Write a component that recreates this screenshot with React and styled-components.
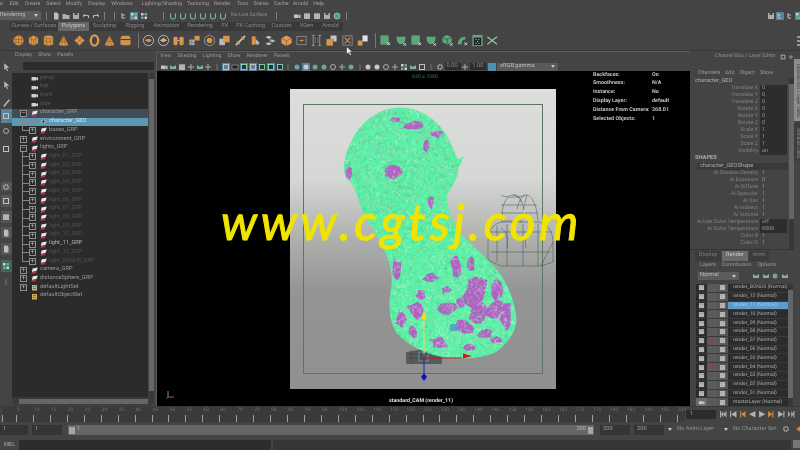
import React, { useMemo } from 'react'
import styled, { createGlobalStyle } from 'styled-components'

const GlobalStyle = createGlobalStyle`
  html, body { margin: 0; padding: 0; background: #444; }
  body { width: 800px; height: 450px; overflow: hidden; }
  * { box-sizing: border-box; }
`

const Screen = styled.div`
  position: relative;
  width: 800px;
  height: 450px;
  overflow: hidden;
  background: #444;
  color: #a4a4a4;
  font: 5.7px/1 Roboto, "Liberation Sans", sans-serif;
  text-rendering: geometricPrecision;
  white-space: nowrap;
  display: grid;
  grid-template-rows: 9px 13px 9px 20px 355px 18px 13px 13px;
  filter: blur(0.35px);
`

const MenuBar = styled.div`
  display: flex;
  align-items: center;
  font-size: 5.3px;
  background: linear-gradient(#4a4340, #444 25%);
`
const MenuItem = styled.span`
  position: relative;
  margin-left: ${p => p.$gap}px;
  color: #a0a0a0;
`

const StatusRow = styled.div`
  display: flex;
  align-items: center;
`
const ModeSelect = styled.div`
  width: 41px;
  height: 9px;
  background: #5c5c5c;
  color: #b8b8b8;
  display: flex;
  align-items: center;
  justify-content: space-between;
  padding: 0 3px 0 0;
  border-radius: 0 1px 1px 0;
`
const Caret = styled.i`
  width: 0;
  height: 0;
  border: 2px solid transparent;
  border-top: 3px solid #c8c8c8;
  border-bottom: 0;
  display: inline-block;
`
const Divider = styled.i`
  width: 1px;
  height: 8px;
  background: #7c7c7c;
  margin-left: ${p => p.$gap}px;
  flex: none;
`
const IconGroup = styled.div`
  display: flex;
  align-items: center;
  flex: none;
  margin-left: ${p => p.$gap || 0}px;
  gap: ${p => p.$space || 2}px;
`
const Glyph = styled.svg`
  width: ${p => p.$size || 8}px;
  height: ${p => p.$size || 8}px;
  flex: none;
  display: block;
  background: ${p => (p.$on ? '#56829a' : 'transparent')};
`
const RightGroup = styled(IconGroup)`
  margin-left: auto;
`
const LiveLabel = styled.span`
  margin-left: 4px;
  width: 45px;
  font-size: 5.2px;
  color: #8e8e8e;
`

const TabRow = styled.div`
  display: flex;
  align-items: stretch;
  padding-left: 10px;
`
const TabStrip = styled.div`
  display: flex;
  width: 333px;
  background: #393939;
`
const ShelfTab = styled.span`
  display: flex;
  align-items: center;
  justify-content: center;
  width: ${p => p.$w}px;
  background: ${p => (p.$on ? '#686868' : 'transparent')};
  color: ${p => (p.$on ? '#c8c8c8' : '#858585')};
`

const Shelf = styled.div`
  display: flex;
  align-items: center;
  padding-left: 11.5px;
  border-bottom: 1px solid #383838;
`
const ShelfSep = styled.i`
  width: 1px;
  height: 15px;
  background: #777;
  margin: 0 3px 0 4px;
  flex: none;
`
const ShelfIcon = styled.svg`
  width: 13px;
  height: 13px;
  flex: none;
  margin-right: 2.3px;
`
const Scroller = styled.div`
  margin-left: auto;
  width: 4px;
  margin-right: 3px;
  display: flex;
  flex-direction: column;
  gap: 2px;
  align-items: center;
`
const Nub = styled.i`
  width: 3px;
  height: 2px;
  background: #999;
`

const Main = styled.div`
  display: grid;
  grid-template-columns: 12px 143px 535px 110px;
  min-height: 0;
`

const Toolbox = styled.div`
  display: flex;
  flex-direction: column;
  align-items: center;
`
const ToolSlot = styled.div`
  width: 11px;
  height: ${p => p.$h || 10}px;
  margin-top: ${p => p.$mt || 0}px;
  flex: none;
  background: ${p => p.$bg || 'transparent'};
  display: flex;
  align-items: center;
  justify-content: center;
`

const Outliner = styled.div`
  display: flex;
  flex-direction: column;
  min-height: 0;
`
const PanelMenu = styled.div`
  height: 10px;
  flex: none;
  display: flex;
  align-items: center;
  padding-left: 3px;
  gap: 6px;
  font-size: 5.3px;
  color: #989898;
`
const FilterRow = styled.div`
  height: 12px;
  flex: none;
  display: flex;
  padding: 1px 1px 3px 11px;
`
const FilterInput = styled.div`
  flex: 1;
  background: #2c2c2c;
`
const OutlinerBody = styled.div`
  flex: 1;
  display: flex;
  min-height: 0;
`
const TreeList = styled.div`
  width: 136px;
  height: 325px;
  background: #2b2b2b;
  padding-top: 1px;
  overflow: hidden;
`
const ScrollTrack = styled.div`
  width: ${p => p.$w || 5}px;
  margin-left: ${p => p.$ml ?? 1}px;
  background: #383838;
  display: flex;
  flex-direction: column;
  align-items: center;
`
const ScrollThumb = styled.div`
  width: 100%;
  flex: 1;
  margin: ${p => p.$m || '6px 0'};
  background: #666;
`
const HScroll = styled.div`
  height: 8px;
  flex: none;
  margin: 0 1px 1px 1px;
  background: #3a3a3a;
  display: flex;
  align-items: center;
  padding: 0 6px;
`
const HThumb = styled.div`
  flex: 1;
  height: 5px;
  background: #666;
`

const TreeRow = styled.div`
  position: relative;
  height: 8.72px;
  display: flex;
  align-items: center;
  padding-left: ${p => p.$indent}px;
  background: ${p => (p.$sel === 'main' ? '#5b98b6' : p.$sel === 'parent' ? '#414d58' : 'transparent')};
  color: ${p => p.$color};
  &::before {
    content: '';
    display: ${p => (p.$branch ? 'block' : 'none')};
    position: absolute;
    left: 10px;
    top: -1px;
    bottom: ${p => (p.$last ? '4px' : '-1px')};
    width: 1px;
    background: #858585;
  }
  &::after {
    content: '';
    display: ${p => (p.$branch ? 'block' : 'none')};
    position: absolute;
    left: 10px;
    top: 4px;
    width: ${p => (p.$plain ? 16 : 7)}px;
    height: 1px;
    background: #858585;
  }
`
const Expander = styled.span`
  position: relative;
  z-index: 1;
  width: 7px;
  height: 7px;
  flex: none;
  margin-right: 4px;
  border: 1px solid #8e8e8e;
  background: #2b2b2b;
  color: #c0c0c0;
  font: 7px/5px "Liberation Sans", sans-serif;
  text-align: center;
  visibility: ${p => (p.$hide ? 'hidden' : 'visible')};
`
const NodeIcon = styled.svg`
  width: 7px;
  height: 7px;
  flex: none;
  margin-right: 2px;
`

const Viewport = styled.div`
  position: relative;
  display: flex;
  flex-direction: column;
  margin-left: 1px;
  border-top: 1px solid #5a5a5a;
  border-left: 1px solid #5a5a5a;
  min-height: 0;
`
const ViewIcons = styled.div`
  height: 9px;
  flex: none;
  display: flex;
  align-items: center;
  padding-left: 3px;
  gap: 0.9px;
`
const NumField = styled.span`
  width: 16px;
  height: 7px;
  flex: none;
  background: #2c2c2c;
  color: #8e8e8e;
  padding: 0.5px 0 0 2px;
`
const GammaBlue = styled.i`
  width: 8px;
  height: 8px;
  flex: none;
  margin-left: 1px;
  background: #4d93ad;
`
const GammaSelect = styled.div`
  width: 61px;
  height: 8px;
  flex: none;
  background: #5a5a5a;
  color: #bcbcbc;
  display: flex;
  align-items: center;
  justify-content: space-between;
  padding: 0 3px 0 3px;
`
const Canvas = styled.div`
  position: relative;
  flex: 1;
  background: #000;
  display: flex;
  padding: 18px 134px 17px 133px;
  min-height: 0;
`
const Plate = styled.div`
  flex: 1;
  padding: 15px 13px;
  display: flex;
  background: linear-gradient(#dcdedb 0%, #d5d7d5 30%, #abadab 52%, #939493 68%, #8f908f 100%);
`
const SafeGate = styled.div`
  flex: 1;
  border: 1px solid #5d7564;
`
const MeshLayer = styled.svg`
  position: absolute;
  left: 0;
  top: 0;
  width: 534px;
  height: 337px;
`
const ResLabel = styled.span`
  position: absolute;
  left: 255px;
  top: 4px;
  color: #1f5a35;
  font-size: 5.2px;
  font-weight: 700;
`
const CamLabel = styled.span`
  position: absolute;
  left: 232px;
  bottom: 2px;
  color: #e0e0e0;
  font-size: 5.3px;
  font-weight: 700;
`
const Hud = styled.div`
  position: absolute;
  left: 436px;
  top: 0;
  display: grid;
  grid-template-columns: 59px auto;
  grid-auto-rows: 8.8px;
  align-items: center;
  color: #c4c4c4;
  font-size: 5.4px;
  font-weight: 700;
`
const AxisMark = styled.svg`
  position: absolute;
  left: 8px;
  bottom: 6px;
  width: 12px;
  height: 12px;
`

const Side = styled.div`
  display: grid;
  grid-template-columns: 104px 6px;
  min-height: 0;
`
const SideMain = styled.div`
  display: flex;
  flex-direction: column;
  min-height: 0;
`
const SideHeader = styled.div`
  height: 18px;
  flex: none;
  display: flex;
  align-items: flex-start;
  padding: 3px 0 0 25px;
  color: #8e8e8e;
  font-size: 5.2px;
`
const HeaderTools = styled.div`
  margin-left: auto;
  display: flex;
  gap: 2px;
`
const ChannelMenu = styled.div`
  height: 9px;
  flex: none;
  display: flex;
  align-items: center;
  padding-left: 8px;
  gap: 5px;
  font-size: 5.4px;
  color: #9c9c9c;
`
const ChannelBody = styled.div`
  height: 172px;
  flex: none;
  display: flex;
  overflow: hidden;
  border-bottom: 1px solid #353535;
`
const ChannelRows = styled.div`
  width: 98px;
  flex: none;
`
const NodeTitle = styled.div`
  padding-left: 5px;
  color: #adadad;
  display: flex;
  align-items: center;
  font-weight: ${p => (p.$bold ? 700 : 400)};
  height: ${p => p.$h || 7}px;
`
const ShapeName = styled.div`
  height: 7px;
  margin-left: 7px;
  padding-left: 3px;
  background: #393939;
  color: #adadad;
  display: flex;
  align-items: center;
`
const AttrRow = styled.div`
  display: grid;
  grid-template-columns: 68px 27px;
  column-gap: 2px;
  height: 7px;
  align-items: center;
  color: #828282;
  font-size: 5.4px;
`
const AttrName = styled.span`
  text-align: right;
`
const AttrValue = styled.span`
  height: 7px;
  padding-left: 2px;
  line-height: 7px;
  color: #999;
  background: ${p => (p.$dark ? '#2d2d2d' : 'transparent')};
`

const LayerTabs = styled.div`
  height: 10px;
  margin-top: 1px;
  flex: none;
  display: flex;
  align-items: stretch;
  padding-left: 5px;
`
const LayerTab = styled.span`
  width: ${p => p.$w}px;
  display: flex;
  align-items: center;
  justify-content: center;
  background: ${p => (p.$on ? '#6a6a6a' : '#3b3b3b')};
  color: ${p => (p.$on ? '#c8c8c8' : '#7c7c7c')};
  margin-right: 1px;
`
const LayerMenu = styled(ChannelMenu)`
  height: 10px;
  padding-left: 10px;
  gap: 6px;
`
const LayerTools = styled.div`
  height: 10px;
  flex: none;
  display: flex;
  align-items: center;
  padding-left: 8px;
`
const BlendSelect = styled.div`
  width: 41px;
  height: 8px;
  background: #5c5c5c;
  color: #bcbcbc;
  display: flex;
  align-items: center;
  justify-content: space-between;
  padding: 0 3px 0 2px;
  margin-right: 11px;
`
const LayerBody = styled.div`
  display: flex;
  margin-top: 3px;
  padding-left: 6px;
  flex: 1;
  min-height: 0;
`
const LayerList = styled.div`
  width: 92px;
  flex: none;
`
const LayerRow = styled.div`
  display: grid;
  grid-template-columns: 11px 10px 11px 60px;
  height: 8.8px;
  align-items: stretch;
  border-bottom: 1px solid #3a3a3a;
`
const LayerCell = styled.span`
  display: flex;
  align-items: center;
  justify-content: center;
  background: ${p => p.$bg};
`
const RedDot = styled.i`
  width: 4px;
  height: 4px;
  border-radius: 50%;
  background: #9c3a42;
`
const LayerName = styled.span`
  display: flex;
  align-items: center;
  padding-left: 5px;
  overflow: hidden;
  background: ${p => (p.$on ? '#5b9ccb' : '#2c2c2c')};
  color: ${p => (p.$on ? '#a8cbe2' : '#adadad')};
  font-size: 5.05px;
`
const SideTabs = styled.div`
  display: flex;
  flex-direction: column;
  padding-top: 8px;
  gap: 2px;
`
const SideTab = styled.span`
  height: ${p => p.$h}px;
  writing-mode: vertical-rl;
  font-size: 4.6px;
  padding-top: 2px;
  overflow: hidden;
  text-align: center;
  line-height: 6px;
  background: ${p => (p.$on ? '#8d8d8d' : '#3d3d3d')};
  color: ${p => (p.$on ? '#444' : '#8d8d8d')};
`

const TimeRow = styled.div`
  display: flex;
  align-items: flex-start;
  border-top: 1px solid #383838;
`
const Ruler = styled.div`
  margin-left: 2px;
  width: 683px;
  height: 15px;
  flex: none;
  background: #3a3a3a;
  display: flex;
`
const RulerCell = styled.span`
  width: ${p => p.$w || 16.95}px;
  flex: none;
  display: block;
  color: #6e6e6e;
  font-size: 5px;
  padding: 1px 0 0 1px;
  background: linear-gradient(#a0a0a0, #a0a0a0) 0 100% / 1px 7px no-repeat;
`
const CurrentFrame = styled.span`
  width: 30px;
  height: 9px;
  flex: none;
  margin: 3px 0 0 1px;
  background: #2c2c2c;
  color: #a0a0a0;
  padding: 1.5px 0 0 4px;
`
const Transport = styled.div`
  display: flex;
  align-items: center;
  margin: 3px 0 0 3px;
  gap: 1.2px;
`

const RangeRow = styled.div`
  display: flex;
  align-items: flex-start;
  padding-top: 1px;
`
const RangeField = styled.span`
  width: ${p => p.$w}px;
  height: 10px;
  flex: none;
  margin-left: ${p => p.$gap || 0}px;
  background: #343434;
  color: #a0a0a0;
  padding: 2px 0 0 3px;
`
const RangeSlider = styled.div`
  width: 526px;
  height: 10px;
  flex: none;
  margin-left: 6px;
  background: #666;
  display: flex;
  align-items: center;
  padding: 0 1px;
  color: #b4b4b4;
`
const RangeHandle = styled.i`
  width: ${p => p.$w}px;
  height: 7px;
  flex: none;
  background: #a6a6a6;
`
const RangeStart = styled.span`
  margin-left: 2px;
`
const RangeEnd = styled.span`
  margin: 0 2px 0 auto;
`
const SetLabel = styled.span`
  display: flex;
  align-items: center;
  gap: 5px;
  margin-left: ${p => p.$gap}px;
  padding-top: 2px;
  width: ${p => p.$w}px;
  flex: none;
  color: #909090;
`

const CommandRow = styled.div`
  display: flex;
  align-items: stretch;
  padding-top: 3px;
`
const MelLabel = styled.span`
  width: 19px;
  padding: 3px 0 0 4px;
  color: #a8a8a8;
`
const MelInput = styled.div`
  width: 252px;
  background: #2d2d2d;
  flex: none;
`
const MelOutput = styled.div`
  flex: 1;
  margin: 0 2px;
  background: #363636;
`
const MelButton = styled.div`
  width: 8px;
  height: 8px;
  background: #777;
  margin-right: 2px;
`

const Watermark = styled.div`
  position: absolute;
  left: 221px;
  top: 196px;
  color: #f0e400;
  font: italic 400 50px/1 Lato, "Liberation Sans", sans-serif;
  letter-spacing: 3.6px;
  -webkit-text-stroke: 1px #f0e400;
  pointer-events: none;
`
const Pointer = styled.svg`
  position: absolute;
  left: 346px;
  top: 46px;
  width: 7px;
  height: 10px;
`

const menu = [
  ['e', 0], ['Edit', 7], ['Create', 6], ['Select', 6], ['Modify', 5], ['Display', 6], ['Windows', 6],
  ['Lighting/Shading', 9], ['Texturing', 5], ['Render', 5], ['Toon', 6], ['Stereo', 5], ['Cache', 5], ['Arnold', 4], ['Help', 5],
]
const tabs = [
  ['Curves / Surfaces', 48], ['Polygons', 31, true], ['Sculpting', 31], ['Rigging', 30], ['Animation', 33], ['Rendering', 34],
  ['FX', 16], ['FX Caching', 35], ['Custom', 27], ['XGen', 23], ['Arnold', 25],
]

const shapes = {
  sphere: <><circle cx="7" cy="7" r="5.5" fill="#d8954c" /><path d="M2 6h10M2 9h10M7 1.5v11M4 2.5v9M10 2.5v9" stroke="#8a5a2a" strokeWidth=".6" fill="none" /></>,
  cube: <><path d="M7 1.5l5 2.500v6l-5 2.500-5-2.500V4z" fill="#d8954c" /><path d="M2 4l5 2.500L12 4M7 6.500v6M4.500 2.800v8.500M9.500 2.800v8.500" stroke="#8a5a2a" strokeWidth=".6" fill="none" /></>,
  cyl: <><path d="M2 3.500c0-2.500 10-2.500 10 0v7c0 2.500-10 2.500-10 0z" fill="#d8954c" /><path d="M2 3.500c0 2 10 2 10 0M2 7c0 2 10 2 10 0M5 4.500v8M9 4.500v8" stroke="#8a5a2a" strokeWidth=".6" fill="none" /></>,
  cone: <><path d="M7 1.500l5 10c-2 1.500-8 1.500-10 0z" fill="#d8954c" /><path d="M7 1.500L5 12.500M7 1.500l2 11M4 8h6" stroke="#8a5a2a" strokeWidth=".6" fill="none" /></>,
  plane: <><path d="M7 1.500L12.500 7 7 12.500 1.500 7z" fill="#d8954c" /><path d="M4.200 4.200L9.800 9.800M9.800 4.200L4.200 9.800" stroke="#8a5a2a" strokeWidth=".6" fill="none" /></>,
  torus: <ellipse cx="7" cy="7" rx="4" ry="5.500" fill="none" stroke="#d8954c" strokeWidth="2.600" />,
  bucket: <><path d="M3 2h8l1.500 3v6c0 1.500-11 1.500-11 0V5z" fill="#d0954f" /><path d="M1.500 6h11" stroke="#333" strokeWidth="1" /></>,
  ringA: <><circle cx="7" cy="7" r="5.500" fill="none" stroke="#bcbcbc" strokeWidth="1" /><path d="M3.500 7c1-2 6-2 7 0-1 2-6 2-7 0z" fill="#d8954c" /></>,
  ringB: <><circle cx="7" cy="7" r="5.500" fill="none" stroke="#bcbcbc" strokeWidth="1" /><path d="M3 7l4-3 4 3-4 2z" fill="#d8ac80" /></>,
  pair: <><rect x="1.500" y="3" width="4.500" height="9" rx="1.500" fill="#d8954c" /><rect x="8" y="3" width="4.500" height="9" rx="1.500" fill="#d8954c" /><path d="M6 7h2" stroke="#ccc" /></>,
  grid: <><rect x="1.500" y="6" width="5.500" height="6" fill="#b0b0b0" /><rect x="7" y="2" width="5.500" height="5" fill="#d8954c" /><path d="M1.500 9h5.500M4 6v6" stroke="#555" strokeWidth=".5" /></>,
  hex: <><path d="M7 1l5.200 3v6L7 13l-5.200-3V4z" fill="none" stroke="#aaa" strokeWidth=".8" /><circle cx="7" cy="7" r="3" fill="#d8954c" /></>,
  stack: <><rect x="1.500" y="5" width="6" height="7" fill="#bcbcbc" /><rect x="5.500" y="2" width="7" height="7" fill="#d8954c" /></>,
  slash: <><path d="M2 12L12 2" stroke="#ccc" strokeWidth="1.600" /><path d="M3 8l3 3M8 3l3 3" stroke="#d8954c" strokeWidth="1.400" /></>,
  bevel: <><path d="M3 2.500h4v9H3z" fill="#d8954c" /><path d="M7 5l4.500 4.500L9 12 7 10z" fill="#b8b8b8" /></>,
  nodes: <><path d="M1.500 3.500L5 2l3.500 1.500L5 5zM5.500 7.500L9 6l3.500 1.500L9 9zM1.500 10.500L5 9l3.500 1.500L5 12z" fill="#c4c4c4" /><path d="M5 5l4 2" stroke="#d8954c" /></>,
  box: <><path d="M7 1.500l5.500 3v5.500L7 13l-5.500-3V4.500z" fill="#dd9c4e" /><path d="M1.500 4.500L7 7.500l5.500-3M7 7.500V13" stroke="#7c5228" strokeWidth=".7" fill="none" /></>,
  frame: <><rect x="2" y="2.500" width="10" height="9" fill="none" stroke="#999" strokeWidth=".8" /><path d="M5 7h4" stroke="#d8954c" strokeWidth="1.400" /></>,
  bars: <><path d="M3.500 1.500v11M10.500 1.500v11M2 1.500h3M2 12.500h3M9 1.500h3M9 12.500h3" stroke="#aaa" strokeWidth=".8" /><path d="M5.500 4v6M8.500 4v6" stroke="#d8954c" strokeDasharray="1 1" /></>,
  quad: <><rect x="1.500" y="5.500" width="7" height="7" fill="#d8954c" /><path d="M6 1.500h6.500V8H9V5.500H6z" fill="#c4c4c4" /></>,
  xbox: <><rect x="2" y="2" width="10" height="10" fill="#444" stroke="#999" strokeWidth=".8" /><path d="M4 4l6 6M10 4l-6 6" stroke="#d8954c" strokeWidth="1.200" /></>,
  step: <><rect x="2" y="7" width="5" height="5.500" fill="#d8954c" /><path d="M7 1.500h5.500V8H7z" fill="#e4e4e4" /></>,
  greenBox: <><rect x="1.500" y="1.500" width="9" height="10" fill="#5aa87c" /><path d="M9 9l3 3M12 9l-3 3" stroke="#ddd" /></>,
  greenCup: <><path d="M1.500 3h10c0 5-2 8-5 8s-5-3-5-8z" fill="#5aa87c" /><path d="M9 10l3 2.500M12 10l-3 2.500" stroke="#ddd" /></>,
  greenCube: <><path d="M6.500 1l5 2.500v5l-5 3-5-3v-5z" fill="#5aa87c" /><path d="M1.500 3.500l5 2.500 5-2.500M6.500 6v5.500" stroke="#333" strokeWidth=".6" fill="none" /><path d="M9.500 10l3 2.500M12.500 10l-3 2.500" stroke="#ddd" /></>,
  greenLeg: <><path d="M2 11c0-5 3-8 8-8v3c-3 0-4 2-4 5z" fill="#5aa87c" /><path d="M9 9l3 3M12 9l-3 3" stroke="#ddd" /></>,
  greenDice: <><rect x="1.500" y="1" width="11" height="12" fill="#5aa87c" /><rect x="3" y="4" width="8" height="8" fill="#222" /><path d="M5 6h1M8 6h1M6.500 8h1M5 10h1M8 10h1" stroke="#eee" /></>,
  greenX: <path d="M1.500 3l5 4 5.500-4M1.500 11l5-4 5.500 4" stroke="#8fd0a8" strokeWidth="1.200" fill="none" />,
}
const shelfA = ['sphere', 'cube', 'cyl', 'cone', 'plane', 'torus', 'cone', 'bucket']
const shelfB = ['ringA', 'ringB', 'pair', 'grid', 'hex', 'stack', 'slash', 'bevel', 'nodes', 'box', 'frame', 'bars', 'quad', 'xbox', 'step']
const shelfC = ['greenBox', 'greenCup', 'greenBox', 'greenCup', 'greenCube', 'greenLeg', 'greenDice', 'greenX']

const mini = {
  page: <path d="M2 .5h3l1.500 1.500v5.500H2z" fill="#bdbdbd" />,
  folder: <path d="M.5 2h3l1 1h3v4h-7z" fill="#aeaeae" />,
  disk: <><rect x="1" y="1" width="6" height="6" fill="#aeaeae" /><rect x="2.500" y="1" width="3" height="2" fill="#444" /></>,
  undo: <path d="M1.500 5V3.500h5V6M1.500 3.500l1.500-1.500" stroke="#b8b8b8" fill="none" />,
  redo: <path d="M6.500 5V3.500h-5V6M6.500 3.500L5 2" stroke="#b8b8b8" fill="none" />,
  tree: <path d="M2 1v2h3M2 3v3h3" stroke="#c0c0c0" fill="none" />,
  dots: <><rect x="1" y="1" width="2.500" height="2.500" fill="#d0d0d0" /><rect x="4.500" y="1" width="2.500" height="2.500" fill="#6a9" /><rect x="1" y="4.500" width="2.500" height="2.500" fill="#6a9" /><rect x="4.500" y="4.500" width="2.500" height="2.500" fill="#d0d0d0" /></>,
  magnet: <path d="M1.500 1.500v3a2.500 2.500 0 0 0 5 0v-3" stroke="#7fb0a8" strokeWidth="1.100" fill="none" />,
  cam: <><rect x="1" y="2.500" width="4.500" height="3.500" fill="#c4c4c4" /><path d="M5.500 3.500l2-1v4l-2-1z" fill="#c4c4c4" /></>,
  clap: <><rect x="1" y="2.500" width="6" height="4.500" fill="#b4b4b4" /><path d="M1 1.500h6v1H1z" fill="#e4e4e4" /></>,
  teal: <circle cx="4" cy="4" r="3" fill="#3aa3a0" stroke="#ddd" strokeWidth=".6" />,
  frame: <rect x="1.500" y="1.500" width="5" height="5" fill="none" stroke="#c0c0c0" />,
  film: <rect x="1" y="2" width="6" height="4" fill="#222" stroke="#999" strokeWidth=".7" />,
  blue: <rect x="1.500" y="1.500" width="5" height="5" fill="#26333a" stroke="#9fc" strokeWidth=".7" />,
  ball: <circle cx="4" cy="4" r="2.500" fill="#6fa39b" />,
  ballW: <circle cx="4" cy="4" r="2.500" fill="#c8c8c8" />,
  ring: <circle cx="4" cy="4" r="2.500" fill="none" stroke="#aaa" />,
  cross: <path d="M4 1v6M1 4h6" stroke="#aaa" />,
  gear: <circle cx="4" cy="4" r="2.200" fill="none" stroke="#bbb" strokeWidth="1.300" strokeDasharray="1.500 .5" />,
  shot: <path d="M1 6V2l3 2 3-2v4z" fill="#7fb0a0" />,
  bar: <path d="M4 1v6" stroke="#808080" strokeWidth=".8" />,
}
const Mini = ({ k, on, size }) => (
  <Glyph viewBox="0 0 8 8" $on={on} $size={size}>{mini[k]}</Glyph>
)

const viewIcons = [
  ['cam'], ['shot'], ['clap'], ['cross'], ['shot'], ['cross'], ['bar'],
  ['frame', 1], ['film'], ['blue', 1], ['frame', 1], ['blue'], ['blue', 1], ['blue'], ['bar'],
  ['ball'], ['ballW', 1], ['ball'], ['ball'], ['ring'], ['cross'], ['ball'], ['bar'],
  ['ballW'], ['ballW'], ['ring'], ['cross'], ['dots'], ['shot'], ['frame'], ['bar'], ['gear'],
]

const camIcon = <><rect x=".5" y="2" width="4.500" height="3.500" fill="#d0d0d0" /><path d="M5 3l2-1v3.500L5 4.500z" fill="#d0d0d0" /></>
const grpIcon = <><path d="M1.500 1.500L6.800.5 5.500 4 1 5z" fill="#e8e8e8" /><path d="M1 5l4.500-1-.8 2.500L.5 6.800z" fill="#b8304a" /></>
const geoIcon = <><path d="M.5 3.500L3.500 1l3 2.500-3 2.500z" fill="#999" stroke="#ddd" strokeWidth=".5" /><path d="M1.500 3.500h4M3.500 1v5" stroke="#222" strokeWidth=".5" /></>
const setIcon = <><rect x="1" y="1" width="5" height="5.500" fill="#c8b060" /><path d="M2 2.500h3M2 4.500h3" stroke="#4a7fae" /></>

const lightNames = ['01', '02', '03', '04', '05', '06', '07', '08', '09', '10', '11', '12', 'BONUS']
const tree = [
  { t: 'persp', icon: camIcon, indent: 8, hide: true, c: '#5a5a5a' },
  { t: 'top', icon: camIcon, indent: 8, hide: true, c: '#5a5a5a' },
  { t: 'front', icon: camIcon, indent: 8, hide: true, c: '#5a5a5a' },
  { t: 'side', icon: camIcon, indent: 8, hide: true, c: '#5a5a5a' },
  { t: 'character_GRP', icon: grpIcon, indent: 8, sym: '−', c: '#989898', sel: 'parent' },
  { t: 'character_GEO', icon: geoIcon, indent: 17, hide: true, c: '#dce4ea', sel: 'main', branch: true, plain: true },
  { t: 'bases_GRP', icon: grpIcon, indent: 17, sym: '+', c: '#989898', branch: true, last: true },
  { t: 'environment_GRP', icon: grpIcon, indent: 8, sym: '+', c: '#989898' },
  { t: 'lights_GRP', icon: grpIcon, indent: 8, sym: '−', c: '#989898' },
  ...lightNames.map((n, i) => ({
    t: `light_${n}_GRP`, icon: grpIcon, indent: 17, sym: '+', branch: true,
    last: i === lightNames.length - 1, c: n === '11' ? '#b4b4b4' : '#505050',
  })),
  { t: 'camera_GRP', icon: grpIcon, indent: 8, sym: '+', c: '#989898' },
  { t: 'distanceSphere_GRP', icon: grpIcon, indent: 8, sym: '+', c: '#989898' },
  { t: 'defaultLightSet', icon: setIcon, indent: 8, sym: '+', c: '#989898' },
  { t: 'defaultObjectSet', icon: setIcon, indent: 8, hide: true, c: '#989898' },
]

const hud = [
  ['Backfaces:', 'On'], ['Smoothness:', 'N/A'], ['Instance:', 'No'], ['Display Layer:', 'default'],
  ['Distance From Camera:', '268.01'], ['Selected Objects:', '1'],
]
const attrs = [
  ['Translate X', '0'], ['Translate Y', '0'], ['Translate Z', '0'], ['Rotate X', '0'], ['Rotate Y', '0'], ['Rotate Z', '0'],
  ['Scale X', '1'], ['Scale Y', '1'], ['Scale Z', '1'], ['Visibility', 'on'],
]
const shapeAttrs = [
  ['Ai Shadow Density', '1'], ['Ai Exposure', '0'], ['Ai Diffuse', '1'], ['Ai Specular', '1'], ['Ai Sss', '1'],
  ['Ai Indirect', '1'], ['Ai Volume', '1'], ['Ai Use Color Temperature', 'off', true], ['Ai Color Temperature', '6500', true],
  ['Color R', '1'], ['Color G', '1'],
]
const layers = ['BONUS', '12', '11', '10', '09', '08', '07', '06', '05', '04', '03', '02', '01']

const headBody = 'M397 106C415 105 436 116 446 135C452 146 455 156 457 158L462 155L460 160L457 166C457 176 450 186 445 193C446 206 449 216 454 226C464 238 482 252 494 266C506 280 513 298 515 316C515 330 507 340 496 349C480 357 460 357 444 355C426 352 408 344 396 331C388 318 388 302 390 290C393 274 390 262 383 246C378 232 368 222 362 210C358 198 354 184 350 180C344 176 342 168 344 160C345 152 347 146 350 142C355 128 370 108 397 106Z'

const patches = [
  [392, 170, 10, 11], [348, 172, 3, 8], [412, 124, 10, 5], [436, 132, 6, 4], [430, 200, 4, 9], [394, 118, 6, 3], [425, 145, 3, 8],
  [396, 268, 5, 12], [474, 291, 14, 17], [494, 308, 11, 10], [478, 312, 9, 12], [505, 312, 6, 17], [415, 308, 9, 10],
  [445, 306, 11, 6], [462, 325, 11, 8], [438, 340, 10, 6], [400, 318, 6, 8], [484, 332, 8, 5], [430, 276, 9, 5], [455, 264, 6, 11],
  [412, 330, 5, 6], [497, 288, 6, 12], [468, 345, 6, 4], [495, 338, 6, 4], [445, 288, 6, 4], [470, 262, 4, 9], [420, 292, 5, 5], [460, 300, 5, 6],
]

const Mesh = () => {
  const { wire, blobs } = useMemo(() => {
    let seed = 7331
    const rnd = () => {
      seed = (seed * 16807) % 2147483647
      return seed / 2147483647
    }
    // wire strokes are batched per colour, one path each
    const palette = ['#a8c6b4', '#a88fc0', '#b8fbd4', '#3cc888', '#7f9a90']
    const strokes = palette.map(() => '')
    for (let i = 0; i < 6500; i++) {
      const x = 342 + rnd() * 176
      const y = 104 + rnd() * 256
      const a = rnd() * Math.PI * 2
      const len = 1.5 + rnd() * 4
      const r = rnd()
      let c
      if (y < 235) c = r < 0.3 ? 0 : r < 0.42 ? 1 : r < 0.72 ? 2 : r < 0.9 ? 3 : 4
      else c = r < 0.52 ? 2 : r < 0.78 ? 3 : 0
      strokes[c] += `M${x.toFixed(1)} ${y.toFixed(1)}l${(Math.cos(a) * len).toFixed(1)} ${(Math.sin(a) * len).toFixed(1)}`
    }
    const polys = patches.map(([x, y, rx, ry]) => {
      const pts = []
      for (let k = 0; k < 9; k++) {
        const t = (k / 9) * Math.PI * 2
        const s = 0.6 + rnd() * 0.6
        pts.push(`${(x + Math.cos(t) * rx * s).toFixed(1)},${(y + Math.sin(t) * ry * s).toFixed(1)}`)
      }
      return pts.join(' ')
    })
    return {
      wire: strokes.map((d, i) => <path key={i} d={d} stroke={palette[i]} strokeWidth=".4" fill="none" />),
      blobs: polys,
    }
  }, [])
  return (
    <MeshLayer viewBox="156 69 534 337">
      <defs>
        <clipPath id="blob"><path d={headBody} /></clipPath>
      </defs>
      <g fill="none" stroke="#3f5348" strokeWidth=".5">
        <path d="M501 220c-1-18 5-27 11-27s10 8 11 14M512 193c5 0 8 3 8 7M516 207c2-10 6-14 10-14s10 9 11 27" />
        <path d="M500 203h22M500 211h23M501 219h21M524 203h12M524 211h13M500 193c4 3 20 3 24 0M522 208l4-15" />
        <path d="M487 240c0-14 8-20 16-20h32c10 0 17 8 17 20v20l-12 4h-40l-13-6z" />
        <path d="M496 224v36M506 222v42M522 222v42M537 222v42M490 250h60M487 230h64M540 264l12-24M500 226c6 4 8 10 6 20M530 226c-5 4-7 10-5 20" />
      </g>
      <path d="M405 350l24-4 12 4v12h-36z" fill="#5a5a5a" />
      <path d="M408 352h30M407 356h32M410 349v12M420 347v14" stroke="#3f3f3f" strokeWidth=".6" />
      <path d={headBody} fill="#5bf0a6" stroke="#5bf0a6" strokeWidth="1" />
      <g clipPath="url(#blob)">
        {blobs.map((pts, i) => <polygon key={i} points={pts} fill="#b45fc4" />)}
        <circle cx="394" cy="170" r="11" fill="none" stroke="#54e09c" strokeWidth="1.500" />
        {wire}
      </g>
      <rect x="449" y="322" width="7" height="7" fill="#4f9fc0" opacity=".85" />
      <rect x="418" y="350" width="9" height="9" fill="none" stroke="#5f9fbf" strokeWidth=".8" />
      <path d="M423 312v40" stroke="#e8e060" strokeWidth="1" />
      <path d="M423 308l2.500 9h-5z" fill="#f0e020" />
      <path d="M423 356h38" stroke="#c02020" strokeWidth="1" />
      <path d="M471 354l-9 2.500v-5z" fill="#e01010" />
      <path d="M423 356v15" stroke="#2020a0" strokeWidth="1" />
      <path d="M423 371l3 4-3 4-3-4z" fill="#1414c0" />
    </MeshLayer>
  )
}

const Arrow = ({ d, orange }) => (
  <Glyph viewBox="0 0 8 8" $size={8.5}><path d={d} fill={orange ? '#d08a48' : '#b0b0b0'} /></Glyph>
)

export default function App() {
  return (
    <Screen>
      <GlobalStyle />
      <MenuBar>
        {menu.map(([label, gap]) => <MenuItem key={label} $gap={gap}>{label}</MenuItem>)}
      </MenuBar>

      <StatusRow>
        <ModeSelect>Rendering<Caret /></ModeSelect>
        <Divider $gap={5} />
        <IconGroup $gap={5}>
          {['page', 'folder', 'disk', 'undo', 'redo'].map((k, i) => <Mini key={i} k={k} />)}
        </IconGroup>
        <Divider $gap={4} />
        <Divider $gap={9} />
        <IconGroup $gap={5}>
          <Mini k="tree" /><Mini k="dots" on /><Mini k="dots" />
        </IconGroup>
        <Divider $gap={15} />
        <IconGroup $gap={5}>
          {['magnet', 'magnet', 'magnet', 'magnet', 'magnet', 'magnet'].map((k, i) => <Mini key={i} k={k} />)}
        </IconGroup>
        <LiveLabel>No Live Surface</LiveLabel>
        <Divider $gap={0} />
        <IconGroup $gap={16}>
          {['cam', 'clap', 'clap', 'disk', 'teal'].map((k, i) => <Mini key={i} k={k} />)}
        </IconGroup>
        <Divider $gap={5} />
        <RightGroup $space={1.5}>
          <Mini k="disk" /><Mini k="tree" on /><Mini k="tree" /><Mini k="dots" on />
        </RightGroup>
      </StatusRow>

      <TabRow>
        <TabStrip>
          {tabs.map(([label, w, on]) => <ShelfTab key={label} $w={w} $on={on}>{label}</ShelfTab>)}
        </TabStrip>
      </TabRow>

      <Shelf>
        {shelfA.map((k, i) => <ShelfIcon key={i} viewBox="0 0 14 14">{shapes[k]}</ShelfIcon>)}
        <ShelfSep />
        {shelfB.map((k, i) => <ShelfIcon key={i} viewBox="0 0 14 14">{shapes[k]}</ShelfIcon>)}
        <ShelfSep />
        {shelfC.map((k, i) => <ShelfIcon key={i} viewBox="0 0 14 14">{shapes[k]}</ShelfIcon>)}
        <Scroller><Nub /><Nub /><Nub /></Scroller>
      </Shelf>

      <Main>
        <Toolbox>
          {[10, 8, 8].map((mt, i) => (
            <ToolSlot key={i} $mt={mt}>
              <Glyph viewBox="0 0 8 8" $size={9}>
                <path d={i < 2 ? 'M2 1l4.500 4H4l1.500 2.500-1 .5L3.300 5.500 2 7z' : 'M1 7l5-6 1 1-5 6z'} fill="#bcbcbc" />
              </Glyph>
            </ToolSlot>
          ))}
          <ToolSlot $h={14} $mt={2} $bg="#56829a"><Mini k="frame" /></ToolSlot>
          <ToolSlot $mt={3}><Mini k="ring" /></ToolSlot>
          <ToolSlot $mt={8}><Mini k="frame" /></ToolSlot>
          <ToolSlot $h={9} $mt={28} $bg="#555"><Mini k="gear" /></ToolSlot>
          <ToolSlot $h={12} $mt={4} $bg="#555"><Mini k="frame" /></ToolSlot>
          <ToolSlot $h={12} $mt={4} $bg="#555"><Mini k="clap" /></ToolSlot>
          <ToolSlot $h={11} $mt={4} $bg="#555"><Mini k="page" /></ToolSlot>
          <ToolSlot $h={12} $mt={5} $bg="#555"><Mini k="page" /></ToolSlot>
          <ToolSlot $h={12} $mt={5} $bg="#3e6a5a"><Mini k="dots" /></ToolSlot>
          <ToolSlot $h={8} $mt={6}><Mini k="bar" /></ToolSlot>
        </Toolbox>

        <Outliner>
          <PanelMenu><span>Display</span><span>Show</span><span>Panels</span></PanelMenu>
          <FilterRow><FilterInput /></FilterRow>
          <OutlinerBody>
            <TreeList>
              {tree.map(n => (
                <TreeRow key={n.t} $indent={n.indent} $color={n.c} $sel={n.sel} $branch={n.branch} $last={n.last} $plain={n.plain}>
                  <Expander $hide={n.hide}>{n.sym}</Expander>
                  <NodeIcon viewBox="0 0 7 7">{n.icon}</NodeIcon>
                  {n.t}
                </TreeRow>
              ))}
            </TreeList>
            <ScrollTrack><ScrollThumb /></ScrollTrack>
          </OutlinerBody>
          <HScroll><HThumb /></HScroll>
        </Outliner>

        <Viewport>
          <PanelMenu>
            <span>View</span><span>Shading</span><span>Lighting</span><span>Show</span><span>Renderer</span><span>Panels</span>
          </PanelMenu>
          <ViewIcons>
            {viewIcons.map(([k, on], i) => <Mini key={i} k={k} on={on} />)}
            <NumField>0.00</NumField>
            <Mini k="cross" />
            <NumField>1.00</NumField>
            <GammaBlue />
            <GammaSelect>sRGB gamma<Caret /></GammaSelect>
          </ViewIcons>
          <Canvas>
            <Plate><SafeGate /></Plate>
            <Mesh />
            <ResLabel>830 x 1080</ResLabel>
            <Hud>
              {hud.map(([k, v]) => (
                <React.Fragment key={k}><span>{k}</span><span>{v}</span></React.Fragment>
              ))}
            </Hud>
            <CamLabel>standard_CAM (render_11)</CamLabel>
            <AxisMark viewBox="0 0 12 12">
              <path d="M3 9V3" stroke="#40c060" /><path d="M3 9h6" stroke="#d04040" /><path d="M3 9l-2 2" stroke="#4060d0" />
            </AxisMark>
          </Canvas>
        </Viewport>

        <Side>
          <SideMain>
            <SideHeader>
              Channel Box / Layer Editor
              <HeaderTools>
                <Mini k="frame" size={6} />
                <Mini k="cross" size={6} />
              </HeaderTools>
            </SideHeader>
            <ChannelMenu>
              <span>Channels</span><span>Edit</span><span>Object</span><span>Show</span>
            </ChannelMenu>
            <ChannelBody>
              <ChannelRows>
                <NodeTitle>character_GEO</NodeTitle>
                {attrs.map(([k, v]) => (
                  <AttrRow key={k}><AttrName>{k}</AttrName><AttrValue $dark>{v}</AttrValue></AttrRow>
                ))}
                <NodeTitle $bold $h={8}>SHAPES</NodeTitle>
                <ShapeName>character_GEOShape</ShapeName>
                {shapeAttrs.map(([k, v, dark]) => (
                  <AttrRow key={k}><AttrName>{k}</AttrName><AttrValue $dark={dark}>{v}</AttrValue></AttrRow>
                ))}
              </ChannelRows>
              <ScrollTrack $ml={1}><ScrollThumb $m="6px 0 30px" /></ScrollTrack>
            </ChannelBody>
            <LayerTabs>
              <LayerTab $w={26}>Display</LayerTab>
              <LayerTab $w={26} $on>Render</LayerTab>
              <LayerTab $w={20}>Anim</LayerTab>
            </LayerTabs>
            <LayerMenu>
              <span>Layers</span><span>Contribution</span><span>Options</span>
            </LayerMenu>
            <LayerTools>
              <BlendSelect>Normal<Caret /></BlendSelect>
              <IconGroup $gap={2} $space={1.5}>
                <Mini k="shot" /><Mini k="shot" /><Mini k="ball" /><Mini k="shot" />
              </IconGroup>
            </LayerTools>
            <LayerBody>
              <LayerList>
                {layers.map((n, i) => (
                  <LayerRow key={n}>
                    <LayerCell $bg="#2a2a2a"><Mini k="clap" size={7} /></LayerCell>
                    <LayerCell $bg="#5a5a5a">{(n === '07' || n === '04') && <RedDot />}</LayerCell>
                    <LayerCell $bg="#555"><Mini k="clap" size={7} /></LayerCell>
                    <LayerName $on={i === 2}>render_{n} (Normal)</LayerName>
                  </LayerRow>
                ))}
                <LayerRow>
                  <LayerCell $bg="#6a6a6a"><Mini k="cam" size={7} /></LayerCell>
                  <LayerCell $bg="#5a5a5a" />
                  <LayerCell $bg="#555"><Mini k="clap" size={7} /></LayerCell>
                  <LayerName>masterLayer (Normal)</LayerName>
                </LayerRow>
              </LayerList>
              <ScrollTrack $ml={0}><ScrollThumb $m="6px 0 8px" /></ScrollTrack>
            </LayerBody>
          </SideMain>
          <SideTabs>
            <SideTab $h={62} $on>Channel Box / Layer Editor</SideTab>
            <SideTab $h={38}>Attribute Editor</SideTab>
          </SideTabs>
        </Side>
      </Main>

      <TimeRow>
        <Ruler>
          <RulerCell $w={14} />
          {Array.from({ length: 40 }, (_, i) => <RulerCell key={i}>{(i + 1) * 5}</RulerCell>)}
        </Ruler>
        <CurrentFrame>1</CurrentFrame>
        <Transport>
          <Arrow d="M1 1h1v6H1zM7 1v6L4 4zM4 1v6L2 4z" />
          <Arrow d="M1 1h1v6H1zM7 1v6L2 4z" />
          <Arrow orange d="M2 1h1v6H2zM7 1v6L3 4z" />
          <Arrow d="M7 1v6L1 4z" />
          <Arrow d="M1 1v6l6-3z" />
          <Arrow orange d="M1 1v6l4-3zM5 1h1v6H5z" />
          <Arrow d="M1 1v6l5-3zM6 1h1v6H6z" />
          <Arrow d="M1 1v6l2-3zM4 1v6l2-3zM6 1h1v6H6z" />
        </Transport>
      </TimeRow>

      <RangeRow>
        <RangeField $w={28}>1</RangeField>
        <RangeField $w={30} $gap={4}>1</RangeField>
        <RangeSlider>
          <RangeHandle $w={6} />
          <RangeStart>1</RangeStart>
          <RangeEnd>200</RangeEnd>
          <RangeHandle $w={5} />
        </RangeSlider>
        <RangeField $w={30} $gap={6}>200</RangeField>
        <RangeField $w={30} $gap={4}>200</RangeField>
        <SetLabel $gap={4} $w={56}><Caret />No Anim Layer</SetLabel>
        <SetLabel $gap={0} $w={56}><Caret />No Character Set</SetLabel>
        <IconGroup $gap={2} $space={5}>
          <Mini k="gear" /><Glyph viewBox="0 0 8 8"><path d="M4 1l1 2 2 1-2 1-1 2-1-2-2-1 2-1z" fill="#d08a48" /></Glyph>
        </IconGroup>
      </RangeRow>

      <CommandRow>
        <MelLabel>MEL</MelLabel>
        <MelInput />
        <MelOutput />
        <MelButton />
      </CommandRow>

      <Watermark>www.cgtsj.com</Watermark>
      <Pointer viewBox="0 0 7 10"><path d="M.5.5v8l2-1.800L4 9.500l1.500-.7L4 6h2.500z" fill="#eee" stroke="#222" strokeWidth=".5" /></Pointer>
    </Screen>
  )
}
